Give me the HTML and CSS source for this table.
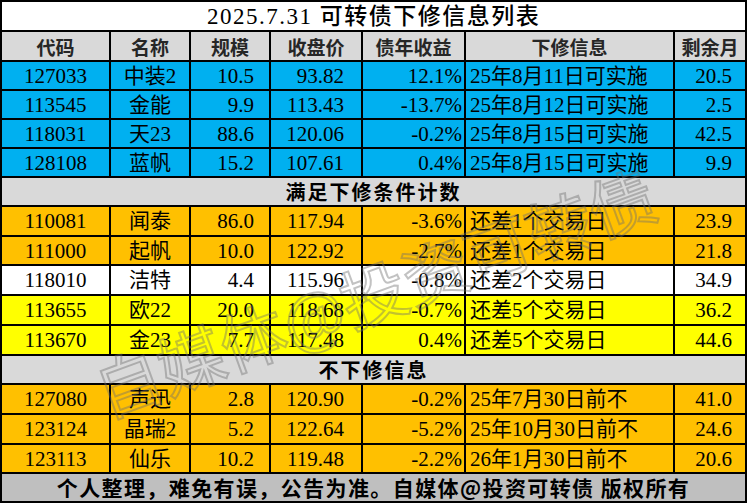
FILE: index.html
```html
<!DOCTYPE html>
<html lang="zh-CN">
<head>
<meta charset="utf-8">
<title>可转债下修信息列表</title>
<link rel="stylesheet" href="styles.css">
</head>
<body>
<div class="wrap">
  <div class="sheet">
    <div class="title span">2025.7.31 可转债下修信息列表</div>

    <div class="hd">代码</div><div class="hd">名称</div><div class="hd">规模</div><div class="hd">收盘价</div><div class="hd">债年收益</div><div class="hd">下修信息</div><div class="hd">剩余月</div>

    <div class="c code blue">127033</div><div class="c name blue">中装2</div><div class="c scale blue">10.5</div><div class="c price blue">93.82</div><div class="c yld blue">12.1%</div><div class="c info blue">25年8月11日可实施</div><div class="c rem blue">20.5</div>
    <div class="c code blue">113545</div><div class="c name blue">金能</div><div class="c scale blue">9.9</div><div class="c price blue">113.43</div><div class="c yld blue">-13.7%</div><div class="c info blue">25年8月12日可实施</div><div class="c rem blue">2.5</div>
    <div class="c code blue">118031</div><div class="c name blue">天23</div><div class="c scale blue">88.6</div><div class="c price blue">120.06</div><div class="c yld blue">-0.2%</div><div class="c info blue">25年8月15日可实施</div><div class="c rem blue">42.5</div>
    <div class="c code blue">128108</div><div class="c name blue">蓝帆</div><div class="c scale blue">15.2</div><div class="c price blue">107.61</div><div class="c yld blue">0.4%</div><div class="c info blue">25年8月15日可实施</div><div class="c rem blue">9.9</div>

    <div class="section span">满足下修条件计数</div>

    <div class="c code orange">110081</div><div class="c name orange">闻泰</div><div class="c scale orange">86.0</div><div class="c price orange">117.94</div><div class="c yld orange">-3.6%</div><div class="c info orange">还差1个交易日</div><div class="c rem orange">23.9</div>
    <div class="c code orange">111000</div><div class="c name orange">起帆</div><div class="c scale orange">10.0</div><div class="c price orange">122.92</div><div class="c yld orange">-2.7%</div><div class="c info orange">还差1个交易日</div><div class="c rem orange">21.8</div>
    <div class="c code white">118010</div><div class="c name white">洁特</div><div class="c scale white">4.4</div><div class="c price white">115.96</div><div class="c yld white">-0.8%</div><div class="c info white">还差2个交易日</div><div class="c rem white">34.9</div>
    <div class="c code yellow">113655</div><div class="c name yellow">欧22</div><div class="c scale yellow">20.0</div><div class="c price yellow">118.68</div><div class="c yld yellow">-0.7%</div><div class="c info yellow">还差5个交易日</div><div class="c rem yellow">36.2</div>
    <div class="c code yellow">113670</div><div class="c name yellow">金23</div><div class="c scale yellow">7.7</div><div class="c price yellow">117.48</div><div class="c yld yellow">0.4%</div><div class="c info yellow">还差5个交易日</div><div class="c rem yellow">44.6</div>

    <div class="section span">不下修信息</div>

    <div class="c code orange">127080</div><div class="c name orange">声迅</div><div class="c scale orange">2.8</div><div class="c price orange">120.90</div><div class="c yld orange">-0.2%</div><div class="c info orange">25年7月30日前不</div><div class="c rem orange">41.0</div>
    <div class="c code orange">123124</div><div class="c name orange">晶瑞2</div><div class="c scale orange">5.2</div><div class="c price orange">122.64</div><div class="c yld orange">-5.2%</div><div class="c info orange">25年10月30日前不</div><div class="c rem orange">24.6</div>
    <div class="c code orange">123113</div><div class="c name orange">仙乐</div><div class="c scale orange">10.2</div><div class="c price orange">119.48</div><div class="c yld orange">-2.2%</div><div class="c info orange">26年1月30日前不</div><div class="c rem orange">20.6</div>

    <div class="footer span">个人整理，难免有误，公告为准。自媒体@投资可转债 版权所有</div>
  </div>
  <div class="watermark">自媒体@投资可转债</div>
</div>
</body>
</html>
```

FILE: styles.css
```css
html, body {
  margin: 0;
  padding: 0;
  background: #ffffff;
}

.wrap {
  position: relative;
  width: 747px;
  height: 503px;
}

.sheet {
  display: grid;
  grid-template-columns: 107px 78px 78px 90px 101px 207px 70px;
  grid-template-rows: 28px 28px 27px 27px 27px 27px 27px 28px 27px 28px 28px 28px 27px 28px 28px 27px 27px;
  gap: 2px;
  padding: 2px;
  background: #000000;
  width: max-content;
}

.sheet > div {
  display: flex;
  align-items: center;
  line-height: 1;
  color: #000;
  white-space: nowrap;
}

.span {
  grid-column: 1 / -1;
  justify-content: center;
}

.title {
  background: #ffffff;
  font-family: "Liberation Serif", "Noto Sans CJK SC", serif;
  font-size: 23px;
  font-weight: 500;
  letter-spacing: 1.5px;
  padding-top: 1px;
}

.hd {
  background: #d9d9d9;
  justify-content: center;
  font-family: "Noto Sans CJK SC", sans-serif;
  font-weight: 700;
  font-size: 19px;
  color: #262626 !important;
}

.section {
  background: #d9d9d9;
  font-family: "Noto Sans CJK SC", sans-serif;
  font-weight: 700;
  font-size: 20px;
  letter-spacing: 2px;
}

.footer {
  background: #bfbfbf;
  font-family: "Noto Sans CJK SC", sans-serif;
  font-weight: 700;
  font-size: 21px;
  letter-spacing: 1.4px;
}

.c {
  font-family: "Liberation Serif", "Noto Sans CJK SC", serif;
  font-size: 21px;
  padding-top: 1px;
}

.code, .name { justify-content: center; }
.scale { justify-content: flex-end; padding-right: 15px; }
.price { justify-content: flex-end; padding-right: 17px; }
.yld { justify-content: flex-end; padding-right: 2px; }
.info { justify-content: flex-start; padding-left: 4px; }
.rem { justify-content: flex-end; padding-right: 13px; }

.blue { background: #00b0f0; }
.orange { background: #ffc000; }
.yellow { background: #ffff00; }
.white { background: #ffffff; }

.watermark {
  position: absolute;
  left: 374px;
  top: 290px;
  transform: translate(-50%, -50%) rotate(-20deg);
  font-family: "Noto Sans CJK SC", sans-serif;
  font-size: 66px;
  font-weight: 400;
  letter-spacing: 0;
  color: transparent;
  -webkit-text-stroke: 2px rgba(110, 110, 110, 0.42);
  white-space: nowrap;
  pointer-events: none;
  line-height: 1;
}
```
